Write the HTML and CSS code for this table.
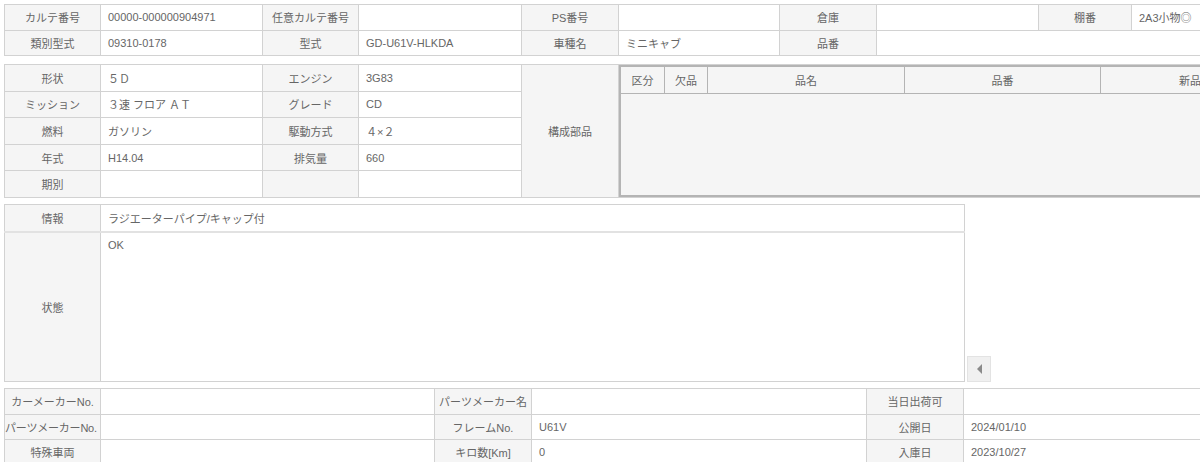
FILE: index.html
```html
<!DOCTYPE html>
<html lang="ja">
<head>
<meta charset="utf-8">
<link rel="stylesheet" href="styles.css">
</head>
<body>
<div class="page">
  <table class="grid sec1">
    <colgroup>
      <col style="width:96px"><col style="width:162px"><col style="width:96px"><col style="width:163px"><col style="width:97px"><col style="width:161px"><col style="width:97px"><col style="width:162px"><col style="width:93px"><col style="width:100px">
    </colgroup>
    <tr>
      <td class="lbl">カルテ番号</td><td class="val">00000-000000904971</td>
      <td class="lbl">任意カルテ番号</td><td class="val"></td>
      <td class="lbl">PS番号</td><td class="val"></td>
      <td class="lbl">倉庫</td><td class="val"></td>
      <td class="lbl">棚番</td><td class="val">2A3小物◎</td>
    </tr>
    <tr>
      <td class="lbl">類別型式</td><td class="val">09310-0178</td>
      <td class="lbl">型式</td><td class="val">GD-U61V-HLKDA</td>
      <td class="lbl">車種名</td><td class="val">ミニキャブ</td>
      <td class="lbl">品番</td><td class="val" colspan="3"></td>
    </tr>
  </table>

  <table class="grid sec2">
    <colgroup>
      <col style="width:96px"><col style="width:162px"><col style="width:96px"><col style="width:163px"><col style="width:97px"><col style="width:600px">
    </colgroup>
    <tr>
      <td class="lbl">形状</td><td class="val">５Ｄ</td>
      <td class="lbl">エンジン</td><td class="val">3G83</td>
      <td class="lbl" rowspan="5">構成部品</td>
      <td class="parts-cell" rowspan="5">
        <div class="parts">
          <div class="parts-head">
            <div class="ph c1">区分</div>
            <div class="ph c2">欠品</div>
            <div class="ph c3">品名</div>
            <div class="ph c4">品番</div>
            <div class="ph c5">新品価格</div>
          </div>
          <div class="parts-body"></div>
        </div>
      </td>
    </tr>
    <tr>
      <td class="lbl">ミッション</td><td class="val">３速 フロア ＡＴ</td>
      <td class="lbl">グレード</td><td class="val">CD</td>
    </tr>
    <tr>
      <td class="lbl">燃料</td><td class="val">ガソリン</td>
      <td class="lbl">駆動方式</td><td class="val">４×２</td>
    </tr>
    <tr>
      <td class="lbl">年式</td><td class="val">H14.04</td>
      <td class="lbl">排気量</td><td class="val">660</td>
    </tr>
    <tr>
      <td class="lbl">期別</td><td class="val"></td>
      <td class="lbl"></td><td class="val"></td>
    </tr>
  </table>

  <div class="sec3">
    <table class="grid info">
      <colgroup><col style="width:96px"><col></colgroup>
      <tr class="info-row">
        <td class="lbl">情報</td><td class="val">ラジエーターパイプ/キャップ付</td>
      </tr>
      <tr class="state-row">
        <td class="lbl">状態</td><td class="val state">OK</td>
      </tr>
    </table>
    <div class="scroll-btn"><span class="tri"></span></div>
  </div>

  <table class="grid sec4">
    <colgroup>
      <col style="width:96px"><col style="width:334px"><col style="width:97px"><col style="width:335px"><col style="width:97px"><col style="width:240px">
    </colgroup>
    <tr>
      <td class="lbl">カーメーカーNo.</td><td class="val"></td>
      <td class="lbl">パーツメーカー名</td><td class="val"></td>
      <td class="lbl">当日出荷可</td><td class="val"></td>
    </tr>
    <tr>
      <td class="lbl tight">パーツメーカーNo.</td><td class="val"></td>
      <td class="lbl">フレームNo.</td><td class="val">U61V</td>
      <td class="lbl">公開日</td><td class="val">2024/01/10</td>
    </tr>
    <tr>
      <td class="lbl">特殊車両</td><td class="val"></td>
      <td class="lbl">キロ数[Km]</td><td class="val">0</td>
      <td class="lbl">入庫日</td><td class="val">2023/10/27</td>
    </tr>
  </table>
</div>
</body>
</html>
```

FILE: styles.css
```css
html, body {
  margin: 0;
  padding: 0;
  background: #fff;
  overflow: hidden;
}
body {
  font-family: "Liberation Sans", "Noto Sans CJK JP", sans-serif;
  font-size: 11px;
  color: #666;
}
.page {
  padding: 4px 0 0 4px;
  width: 1400px;
}
.grid {
  border-collapse: collapse;
  table-layout: fixed;
}
.grid td {
  border: 1px solid #d2d2d2;
  height: 25.5px;
  padding: 0;
  white-space: nowrap;
  overflow: hidden;
  box-sizing: border-box;
}
.lbl {
  background: #f5f5f5;
  text-align: center;
}
.lbl.tight {
  text-align: left;
  padding-left: 0;
  letter-spacing: -0.2px;
}
.val {
  background: #fff;
  padding: 0 0 0 7px !important;
  text-align: left;
}
.sec1 {
  width: 1227px;
  margin-bottom: 8px;
}
.sec2 {
  width: 1214px;
  margin-bottom: 6px;
}
.sec2 td {
  height: 26.2px;
}
.sec2 .parts-cell {
  padding: 0;
  vertical-align: top;
  background: #f5f5f5;
  border-left: 1px solid #c8c8c8;
}
.parts {
  border: 2px solid #b4b4b4;
  border-right: none;
  height: 132px;
  box-sizing: border-box;
  display: flex;
  flex-direction: column;
  background: #f5f5f5;
}
.parts-head {
  display: flex;
  height: 26px;
  border-bottom: 1px solid #b4b4b4;
  flex: 0 0 auto;
}
.ph {
  display: flex;
  align-items: center;
  justify-content: center;
  border-right: 1px solid #b4b4b4;
  flex: 0 0 auto;
}
.ph.c1 { width: 43px; }
.ph.c2 { width: 42px; }
.ph.c3 { width: 196px; }
.ph.c4 { width: 195px; }
.ph.c5 { width: 200px; border-right: none; }
.parts-body {
  flex: 1 1 auto;
}
.sec3 {
  display: flex;
  align-items: flex-end;
  margin-bottom: 6px;
}
.info {
  width: 961px;
}
.info .info-row td {
  height: 27px;
  border-bottom: 2px solid #e2e2e2;
}
.info .state-row td {
  height: 150px;
}
.info td.state {
  vertical-align: top;
  padding-top: 6px !important;
}
.scroll-btn {
  width: 24px;
  height: 26px;
  margin-left: 2px;
  background: #f0f0f0;
  border: 1px solid #e3e3e3;
  box-sizing: border-box;
  display: flex;
  align-items: center;
  justify-content: center;
}
.tri {
  width: 0;
  height: 0;
  border-top: 5px solid transparent;
  border-bottom: 5px solid transparent;
  border-right: 5px solid #8a8a8a;
}
.sec4 {
  width: 1199px;
}
.sec4 td {
  height: 25.6px;
}
```
